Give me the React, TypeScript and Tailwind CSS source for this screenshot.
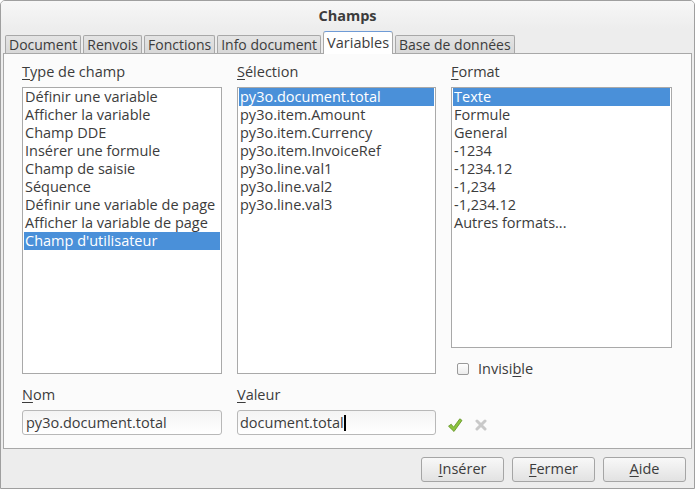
import React from "react";

const font = { fontFamily: '"Open Sans", "Noto Sans", sans-serif' };

function U({ children }: { children: React.ReactNode }) {
  return <span className="underline underline-offset-2 decoration-1">{children}</span>;
}

function ListBox({
  items,
  selected,
  className,
}: {
  items: string[];
  selected: number;
  className: string;
}) {
  return (
    <div className={`border border-[#a9a9a9] bg-white px-px ${className}`}>
      {items.map((it, i) => (
        <div
          key={it}
          className={`h-[18px] leading-[17px] pl-[1px] whitespace-nowrap ${
            i === selected ? "bg-[#4a90d9] text-white" : "text-[#3c3c3c]"
          }`}
        >
          {it}
        </div>
      ))}
    </div>
  );
}

function Button({ children }: { children: React.ReactNode }) {
  return (
    <button className="w-[83px] h-[25px] rounded-[3px] border border-[#a5a5a5] bg-gradient-to-b from-[#f8f8f8] to-[#e2e2e2] text-[#3c3c3c] text-[14.5px] leading-none">
      {children}
    </button>
  );
}

export default function App() {
  const tabs = ["Document", "Renvois", "Fonctions", "Info document"];
  return (
    <div
      className="w-[695px] h-[489px] flex flex-col bg-[#ededed] border border-[#9f9f9f] rounded-t-[5px] text-[14.5px] text-[#3c3c3c] overflow-hidden"
      style={font}
    >
      {/* titre */}
      <div className="h-[28px] shrink-0 flex items-center justify-center font-bold text-[14.5px] bg-gradient-to-b from-[#f7f7f7] to-[#ededed] pt-[1px]">
        Champs
      </div>

      {/* onglets */}
      <div className="h-[24px] shrink-0 flex items-end pl-[4px] gap-[2px] text-[14px]">
        {tabs.map((t) => (
          <div
            key={t}
            className="h-[18px] px-[3px] flex items-center border border-b-0 border-[#a8a8a8] rounded-t-[2px] bg-gradient-to-b from-[#e4e4e4] to-[#d8d8d8] leading-none"
          >
            {t}
          </div>
        ))}
        <div className="h-[23px] -mb-px relative z-10 px-[3px] flex items-center border border-b-0 border-[#a8a8a8] border-t-[#6f9bd6] rounded-t-[3px] bg-white leading-none text-[14.5px]">
          Variables
        </div>
        <div className="h-[18px] px-[3px] flex items-center border border-b-0 border-[#a8a8a8] rounded-t-[2px] bg-gradient-to-b from-[#e4e4e4] to-[#d8d8d8] leading-none">
          Base de données
        </div>
      </div>

      {/* panneau */}
      <div className="mx-[2px] h-[396px] shrink-0 border border-[#a8a8a8] bg-[#fbfbfb] pl-[18px] pt-[9px] flex gap-[15px]">
        <div className="w-[200px] flex flex-col">
          <div className="h-[18px] leading-[18px] mb-[6px]">
            <U>T</U>ype de champ
          </div>
          <ListBox
            className="h-[287px]"
            selected={8}
            items={[
              "Définir une variable",
              "Afficher la variable",
              "Champ DDE",
              "Insérer une formule",
              "Champ de saisie",
              "Séquence",
              "Définir une variable de page",
              "Afficher la variable de page",
              "Champ d'utilisateur",
            ]}
          />
          <div className="h-[18px] leading-[18px] mt-[12px] mb-[6px]">
            <U>N</U>om
          </div>
          <div className="h-[25px] border border-[#b8b8b8] rounded-[3px] bg-gradient-to-b from-[#f4f4f4] to-white pl-[3px] leading-[23px]">
            py3o.document.total
          </div>
        </div>

        <div className="w-[199px] flex flex-col">
          <div className="h-[18px] leading-[18px] mb-[6px]">
            <U>S</U>élection
          </div>
          <ListBox
            className="h-[287px]"
            selected={0}
            items={[
              "py3o.document.total",
              "py3o.item.Amount",
              "py3o.item.Currency",
              "py3o.item.InvoiceRef",
              "py3o.line.val1",
              "py3o.line.val2",
              "py3o.line.val3",
            ]}
          />
          <div className="h-[18px] leading-[18px] mt-[12px] mb-[6px]">
            <U>V</U>aleur
          </div>
          <div className="h-[25px] border border-[#b8b8b8] rounded-[3px] bg-gradient-to-b from-[#f4f4f4] to-white pl-[2px] leading-[23px] flex items-center">
            document.total
            <span className="inline-block w-[2px] h-[16px] bg-black" />
          </div>
        </div>

        <div className="w-[221px] flex flex-col">
          <div className="h-[18px] leading-[18px] mb-[6px]">
            <U>F</U>ormat
          </div>
          <ListBox
            className="h-[261px]"
            selected={0}
            items={[
              "Texte",
              "Formule",
              "General",
              "-1234",
              "-1234.12",
              "-1,234",
              "-1,234.12",
              "Autres formats...",
            ]}
          />
          <div className="flex items-center mt-[14px] pl-[6px] gap-[9px] h-[14px]">
            <span className="w-[12px] h-[12px] rounded-[2px] border border-[#9a9a9a] bg-gradient-to-b from-white to-[#ececec]" />
            <span>
              Invisi<U>b</U>le
            </span>
          </div>
          <div className="flex items-center mt-[41px] gap-[12px] -ml-[4px]">
            <svg width="16" height="16" viewBox="0 0 16 16">
              <path
                d="M1.5 9.2 L4.2 7.2 L6.6 10.2 L12.8 1.8 L15 3.4 L7 14.5 Z"
                fill="#8cc43e"
                stroke="#5f8f22"
                strokeWidth="0.8"
                strokeLinejoin="round"
              />
            </svg>
            <svg width="12" height="12" viewBox="0 0 12 12">
              <path d="M2 2 L10 10 M10 2 L2 10" stroke="#c9c9c9" strokeWidth="3" strokeLinecap="round" />
            </svg>
          </div>
        </div>
      </div>

      {/* boutons */}
      <div className="flex-1 flex items-center justify-end gap-[8px] pr-[8px] pt-[1px]">
        <Button>
          <U>I</U>nsérer
        </Button>
        <Button>
          <U>F</U>ermer
        </Button>
        <Button>
          <U>A</U>ide
        </Button>
      </div>
    </div>
  );
}
